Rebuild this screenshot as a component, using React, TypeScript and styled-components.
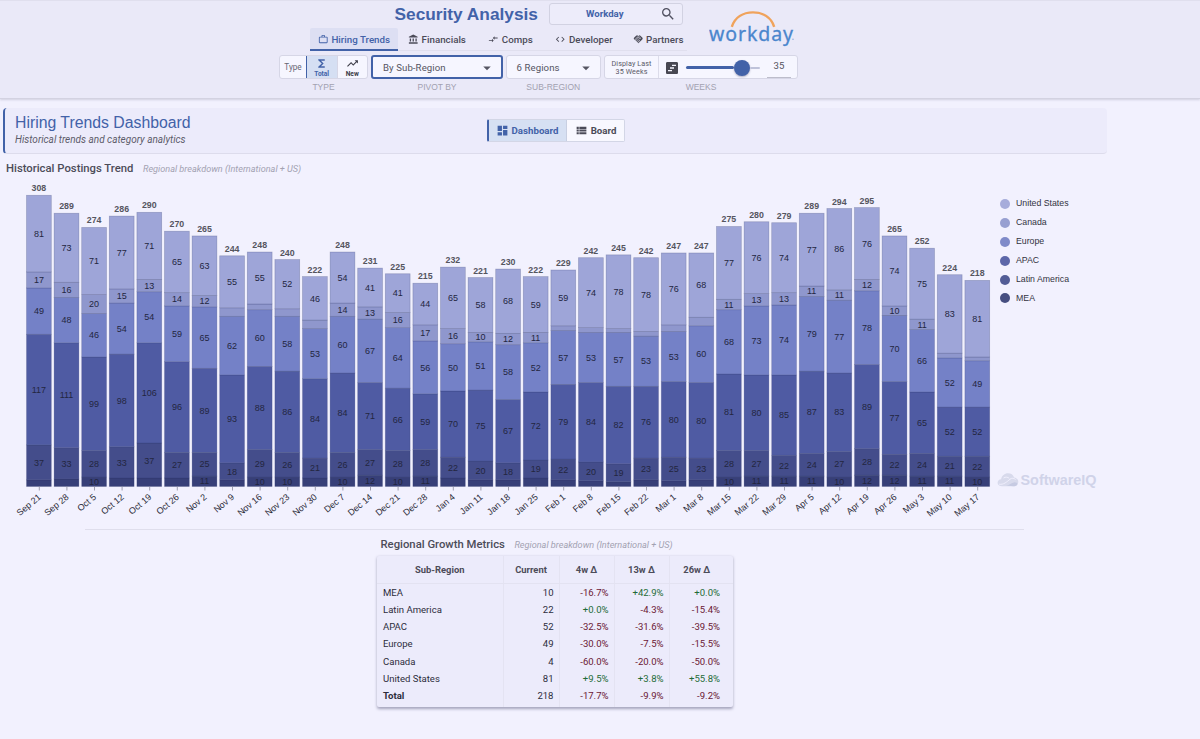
import React from "react";
import styled, { createGlobalStyle, css } from "styled-components";
import {
  MdWorkOutline,
  MdAccountBalance,
  MdCompareArrows,
  MdCode,
  MdHandshake,
  MdFunctions,
  MdTrendingUp,
  MdSearch,
  MdViewTimeline,
  MdDashboard,
  MdViewList,
  MdArrowDropDown,
} from "react-icons/md";

const roboto = `Roboto, "Liberation Sans", sans-serif`;
const arial = `"Liberation Sans", Arial, sans-serif`;
const blue = "#4262a8";

const GlobalStyle = createGlobalStyle`
  * { box-sizing: border-box; }
  body {
    margin: 0;
    background: #f2f1fe;
    font-family: ${roboto};
    color: #2d2d3c;
  }
`;

const Page = styled.div`
  width: 1200px;
  height: 739px;
  overflow: hidden;
  background: #f2f1fe;
`;

/* ---------- header ---------- */

const Header = styled.header`
  height: 99px;
  background: #eae9f8;
  border-top: 1px solid #e0dfee;
  border-bottom: 1px solid #d3d2e1;
  box-shadow: 0 1px 2px rgba(60, 60, 90, 0.18);
`;

const HeaderTop = styled.div`
  display: flex;
  height: 50px;
  padding-left: 310px;
`;

const HeaderMain = styled.div`
  width: 377px;
`;

const TitleRow = styled.div`
  display: flex;
  align-items: center;
  height: 27px;
  padding: 0 0 1px 84.5px;
`;

const AppTitle = styled.h1`
  width: 154.5px;
  margin: 0;
  font: 700 17.3px/26px ${arial};
  color: ${blue};
  white-space: nowrap;
`;

const Search = styled.div`
  display: flex;
  align-items: center;
  width: 134px;
  height: 22px;
  border: 1px solid #d2d2e2;
  border-radius: 3px;
  background: #edecfa;
  color: ${blue};
  font: 700 9.6px/20px ${roboto};
  padding-right: 6.5px;

  span {
    flex: 1;
    text-align: center;
  }
  svg {
    width: 16px;
    height: 16px;
    color: #505060;
  }
`;

const Tabs = styled.nav`
  display: flex;
  height: 23px;
  border-bottom: 1px solid #e0dfee;
`;

const Tab = styled.div<{ $w: number; $active?: boolean }>`
  display: flex;
  flex-shrink: 0;
  align-items: center;
  justify-content: center;
  gap: 3px;
  width: ${(p) => p.$w}px;
  height: 23px;
  padding-top: 2px;
  font: 500 9.75px/20px ${roboto};
  color: #4b4b58;
  white-space: nowrap;
  border-bottom: 2px solid transparent;
  ${(p) =>
    p.$active &&
    css`
      color: ${blue};
      background: #dddff3;
      border-bottom-color: ${blue};
      border-radius: 2px 2px 0 0;
    `}
  svg {
    width: 10.5px;
    height: 10.5px;
  }
`;

const LogoBox = styled.div`
  padding: 8px 0 0 22px;
`;

const Controls = styled.div`
  display: flex;
  align-items: flex-start;
  padding: 4px 0 0 279px;
`;

const Field = styled.div<{ $w: number; $gap: number }>`
  width: ${(p) => p.$w}px;
  margin-right: ${(p) => p.$gap}px;
  label {
    display: block;
    margin-top: 2px;
    text-align: center;
    font: 400 8.5px/12px ${arial};
    color: #a2a1b0;
  }
`;

const ControlBox = styled.div<{ $focus?: boolean }>`
  display: flex;
  height: 24px;
  overflow: hidden;
  border-radius: 3px;
  background: #f6f6ff;
  border: ${(p) => (p.$focus ? `2px solid ${blue}` : "1px solid #d6d6e6")};
`;

const TypeName = styled.div`
  width: 26px;
  font: 400 8.2px/22px ${roboto};
  text-align: center;
  color: #666674;
`;

const TypeOption = styled.div<{ $active?: boolean }>`
  flex: 1;
  display: flex;
  flex-direction: column;
  align-items: center;
  padding-top: 0.5px;
  font: 700 6.6px/8px ${roboto};
  color: ${(p) => (p.$active ? blue : "#3c3c48")};
  background: ${(p) => (p.$active ? "#d5dff3" : "transparent")};
  border-left: ${(p) => (p.$active ? `1.5px solid ${blue}` : "1px solid #d6d6e6")};
  svg {
    width: 13px;
    height: 13px;
  }
`;

const SelectText = styled.div`
  flex: 1;
  display: flex;
  align-items: center;
  justify-content: space-between;
  padding: 1px 5px 0 10px;
  font: 400 9.6px/20px ${roboto};
  letter-spacing: 0.1px;
  color: #555562;
  svg {
    width: 18px;
    height: 18px;
  }
`;

const DisplayText = styled.div`
  width: 54px;
  padding-top: 3.5px;
  border-right: 1px solid #dcdcea;
  font: 400 7.2px/8px ${roboto};
  letter-spacing: 0.1px;
  text-align: center;
  color: #5a5a68;
`;

const WeekIcon = styled.div`
  display: flex;
  align-items: center;
  padding: 1px 6px 0 5px;
  color: #484852;
  svg {
    width: 16px;
    height: 16px;
  }
`;

const Slider = styled.div`
  display: flex;
  align-items: center;
  width: 74px;
  padding-top: 1px;
`;

const Rail = styled.div<{ $w: number; $on?: boolean }>`
  width: ${(p) => p.$w}px;
  height: ${(p) => (p.$on ? 3 : 2)}px;
  border-radius: 2px;
  background: ${(p) => (p.$on ? blue : "#bfc3da")};
`;

const Thumb = styled.div`
  width: 16px;
  height: 16px;
  border-radius: 50%;
  background: ${blue};
  box-shadow: 0 1px 2px rgba(40, 40, 80, 0.35);
`;

const WeekValue = styled.div`
  width: 24px;
  height: 22px;
  margin-left: 7px;
  border-bottom: 1px solid #bdbdcb;
  font: 400 9.6px/20px ${roboto};
  text-align: center;
  color: #555562;
`;

/* ---------- banner ---------- */

const Banner = styled.section`
  display: flex;
  align-items: center;
  width: 1104px;
  height: 46px;
  margin: 8.5px 0 0 3px;
  padding-left: 10px;
  background: #ecebfb;
  border-left: 2px solid ${blue};
  border-bottom: 1px solid #dddcec;
  border-radius: 4px;
`;

const BannerText = styled.div`
  width: 472px;
`;

const BannerTitle = styled.h2`
  margin: 0;
  font: 400 15.8px/19px ${arial};
  color: ${blue};
`;

const BannerSub = styled.p`
  margin: 1px 0 0;
  font: italic 400 10px/14px ${roboto};
  color: #5c5c6a;
`;

const Toggle = styled.div`
  display: flex;
  width: 138px;
  height: 23px;
  border: 1px solid #d3d6e6;
  border-left: 2px solid ${blue};
  border-radius: 2px;
  overflow: hidden;
  background: #f8f8ff;
`;

const ToggleItem = styled.div<{ $w: number; $active?: boolean }>`
  display: flex;
  align-items: center;
  justify-content: center;
  gap: 3px;
  width: ${(p) => p.$w}px;
  padding-right: ${(p) => (p.$active ? 1 : 0)}px;
  font: 700 9.7px/21px ${roboto};
  color: ${(p) => (p.$active ? blue : "#4b4b58")};
  background: ${(p) => (p.$active ? "#d6e0f3" : "transparent")};
  border-right: ${(p) => (p.$active ? "1px solid #c8cfe2" : "none")};
  svg {
    width: 13px;
    height: 13px;
  }
`;

/* ---------- sections ---------- */

const SectionHead = styled.div<{ $left: number; $top: number }>`
  display: flex;
  align-items: baseline;
  gap: 9.5px;
  height: 16px;
  margin: ${(p) => p.$top}px 0 0 ${(p) => p.$left}px;
  white-space: nowrap;
  h3 {
    margin: 0;
    font: 500 11.3px/16px ${roboto};
    color: #4c4c59;
  }
  em {
    font: italic 400 9.15px/16px ${roboto};
    color: #a3a2b2;
  }
`;

const ChartRow = styled.div`
  display: flex;
  height: 352px;
  svg.chart {
    display: block;
  }
`;

const ChartSide = styled.aside`
  display: flex;
  flex-direction: column;
  justify-content: space-between;
  width: 110px;
  padding: 17.5px 0 40.5px;
`;

const Legend = styled.ul`
  margin: 0;
  padding: 0 0 0 9px;
  list-style: none;
`;

const LegendItem = styled.li<{ $color: string }>`
  display: flex;
  align-items: center;
  gap: 6px;
  height: 18.9px;
  font: 400 8.75px/19px ${arial};
  color: #33333f;
  &::before {
    content: "";
    width: 10px;
    height: 10px;
    border-radius: 50%;
    background: ${(p) => p.$color};
  }
`;

const Watermark = styled.div`
  display: flex;
  align-items: center;
  gap: 2px;
  padding-left: 5.5px;
  height: 18px;
  font: 700 14.4px/18px ${arial};
  color: #d0d3e9;
`;

const Divider = styled.hr`
  width: 939px;
  height: 1px;
  margin: 0 0 0 85px;
  border: 0;
  background: #dfdeec;
`;

const Table = styled.table`
  width: 356px;
  margin: 3px 0 0 377px;
  border-collapse: collapse;
  table-layout: fixed;
  background: #ecebfb;
  border-radius: 2px;
  box-shadow: 0 1.5px 3px rgba(50, 50, 90, 0.4);
  font: 400 9.55px/17px ${roboto};
  color: #2d2d3c;

  th {
    height: 27px;
    padding: 0;
    font-weight: 700;
    font-size: 9.4px;
    color: #4c4c59;
    border-bottom: 1px solid #e3e2f1;
  }
  th:not(:last-child),
  td:not(:last-child) {
    border-right: 1px solid #e4e3f2;
  }
  td {
    height: 17.35px;
    padding: 0 5px 0 0;
    text-align: right;
  }
  td:first-child {
    padding-left: 6px;
    text-align: left;
  }
  td:last-child {
    padding-right: 13px;
  }
  th:last-child {
    padding-right: 9px;
  }
  tr:last-child td {
    height: 19.5px;
    padding-bottom: 2px;
  }
  tr:last-child td:first-child {
    font-weight: 700;
  }
`;

const Delta = styled.td<{ $up: boolean }>`
  color: ${(p) => (p.$up ? "#1f6b38" : "#6b1733")};
`;

/* ---------- data ---------- */

// Stacking order, bottom to top.
const series = [
  { name: "MEA", color: "#373f78", dot: "#464e80" },
  { name: "Latin America", color: "#444d8b", dot: "#525c96" },
  { name: "APAC", color: "#4f5ba3", dot: "#5c66a9" },
  { name: "Europe", color: "#7481c7", dot: "#7f8ac9" },
  { name: "Canada", color: "#8f97cd", dot: "#979fd1" },
  { name: "United States", color: "#9ea5d8", dot: "#a6acdb" },
];

const weeks: [string, number[]][] = [
  ["Sep 21", [7, 37, 117, 49, 17, 81]],
  ["Sep 28", [8, 33, 111, 48, 16, 73]],
  ["Oct 5", [10, 28, 99, 46, 20, 71]],
  ["Oct 12", [9, 33, 98, 54, 15, 77]],
  ["Oct 19", [9, 37, 106, 54, 13, 71]],
  ["Oct 26", [9, 27, 96, 59, 14, 65]],
  ["Nov 2", [11, 25, 89, 65, 12, 63]],
  ["Nov 9", [7, 18, 93, 62, 9, 55]],
  ["Nov 16", [10, 29, 88, 60, 6, 55]],
  ["Nov 23", [10, 26, 86, 58, 8, 52]],
  ["Nov 30", [9, 21, 84, 53, 9, 46]],
  ["Dec 7", [10, 26, 84, 60, 14, 54]],
  ["Dec 14", [12, 27, 71, 67, 13, 41]],
  ["Dec 21", [10, 28, 66, 64, 16, 41]],
  ["Dec 28", [11, 28, 59, 56, 17, 44]],
  ["Jan 4", [9, 22, 70, 50, 16, 65]],
  ["Jan 11", [7, 20, 75, 51, 10, 58]],
  ["Jan 18", [7, 18, 67, 58, 12, 68]],
  ["Jan 25", [9, 19, 72, 52, 11, 59]],
  ["Feb 1", [7, 22, 79, 57, 5, 59]],
  ["Feb 8", [6, 20, 84, 53, 5, 74]],
  ["Feb 15", [5, 19, 82, 57, 4, 78]],
  ["Feb 22", [7, 23, 76, 53, 5, 78]],
  ["Mar 1", [6, 25, 80, 53, 7, 76]],
  ["Mar 8", [7, 23, 80, 60, 9, 68]],
  ["Mar 15", [10, 28, 81, 68, 11, 77]],
  ["Mar 22", [11, 27, 80, 73, 13, 76]],
  ["Mar 29", [11, 22, 85, 74, 13, 74]],
  ["Apr 5", [11, 24, 87, 79, 11, 77]],
  ["Apr 12", [10, 27, 83, 77, 11, 86]],
  ["Apr 19", [12, 28, 89, 78, 12, 76]],
  ["Apr 26", [12, 22, 77, 70, 10, 74]],
  ["May 3", [11, 24, 65, 66, 11, 75]],
  ["May 10", [11, 21, 52, 52, 5, 83]],
  ["May 17", [10, 22, 52, 49, 4, 81]],
];

const metrics: [string, number, string, string, string][] = [
  ["MEA", 10, "-16.7%", "+42.9%", "+0.0%"],
  ["Latin America", 22, "+0.0%", "-4.3%", "-15.4%"],
  ["APAC", 52, "-32.5%", "-31.6%", "-39.5%"],
  ["Europe", 49, "-30.0%", "-7.5%", "-15.5%"],
  ["Canada", 4, "-60.0%", "-20.0%", "-50.0%"],
  ["United States", 81, "+9.5%", "+3.8%", "+55.8%"],
  ["Total", 218, "-17.7%", "-9.9%", "-9.2%"],
];

/* ---------- drawings ---------- */

const SegmentText = styled.text`
  font: 400 9px ${arial};
  fill: #23263f;
  text-anchor: middle;
`;
const TotalText = styled.text`
  font: 700 8.8px ${arial};
  fill: #55555e;
  text-anchor: middle;
`;
const AxisText = styled.text`
  font: 400 9px ${arial};
  fill: #2b2b38;
  text-anchor: end;
`;

const BASE = 309.5;
const UNIT = 0.9455;
const PITCH = 27.6;
const BAR = 24.8;

function StackedBars() {
  return (
    <svg className="chart" width="991" height="352" viewBox="0 0 991 352">
      {weeks.map(([label, values], i) => {
        const cx = 38.9 + i * PITCH;
        let y = BASE;
        const total = values.reduce((a, b) => a + b, 0);
        return (
          <g key={label}>
            {values.map((v, s) => {
              const h = v * UNIT;
              y -= h;
              return (
                <g key={s}>
                  <rect
                    x={cx - BAR / 2}
                    y={y}
                    width={BAR}
                    height={h}
                    fill={series[s].color}
                    stroke="#2c3468"
                    strokeOpacity={0.3}
                    strokeWidth={0.7}
                  />
                  {v >= 10 && (
                    <SegmentText x={cx} y={y + h / 2 + 3.2}>
                      {v}
                    </SegmentText>
                  )}
                </g>
              );
            })}
            <TotalText x={cx} y={y - 4}>
              {total}
            </TotalText>
            <line x1={cx + 0.4} x2={cx + 0.4} y1={BASE} y2={BASE + 4} stroke="#8a8a9c" strokeWidth={0.8} />
            <AxisText transform={`translate(${cx + 2.8} ${BASE + 11.5}) rotate(-40)`}>{label}</AxisText>
          </g>
        );
      })}
    </svg>
  );
}

const LogoText = styled.text`
  font: 400 19.5px "Noto Sans", "Open Sans", sans-serif;
  fill: #4a86cd;
  stroke: #4a86cd;
  stroke-width: 0.3px;
`;

function WorkdayLogo() {
  return (
    <svg width="88" height="40" viewBox="0 0 88 40">
      <path d="M22.8 17.8C26 8.5 34 3.4 44 3.4S62 8.5 65.2 17.8" fill="none" stroke="#f0a35c" strokeWidth="2.4" />
      <LogoText x="0" y="31.5" textLength="84">
        workday
      </LogoText>
      <circle cx="84" cy="30.3" r="0.8" fill="#8fb0de" />
    </svg>
  );
}

function CloudMark() {
  return (
    <svg width="22" height="16" viewBox="0 0 22 16">
      <path
        d="M5 14.2C2.300 14.200.6 12.700.6 10.700c0-1.900 1.500-3.300 3.500-3.500C4.700 3.600 7.600 1.200 11 1.200c3 0 5.200 1.600 6.100 4.200 2.400.4 4.200 2 4.200 4.400 0 2.600-1.900 4.400-4.600 4.400z"
        fill="#d8daec"
      />
      <path
        d="M2.200 12.200C6.500 13 10 9.800 13 7.200 14.800 5.800 17 6 18.500 7.500M6.500 6c2-1.300 4.200-1 5.700.3"
        fill="none"
        stroke="#f2f1fe"
        strokeWidth="0.9"
      />
      <path d="M9 13.600c3.500-.4 5.200-3 8.500-3.400 2 0 3 .8 3 2-.8 1.400-2 2-3.800 2z" fill="#c6cae2" />
    </svg>
  );
}

export default function App() {
  return (
    <Page>
      <GlobalStyle />
      <Header>
        <HeaderTop>
          <HeaderMain>
            <TitleRow>
              <AppTitle>Security Analysis</AppTitle>
              <Search>
                <span>Workday</span>
                <MdSearch />
              </Search>
            </TitleRow>
            <Tabs>
              <Tab $w={88} $active>
                <MdWorkOutline />
                Hiring Trends
              </Tab>
              <Tab $w={78}>
                <MdAccountBalance />
                Financials
              </Tab>
              <Tab $w={69}>
                <MdCompareArrows />
                Comps
              </Tab>
              <Tab $w={78}>
                <MdCode />
                Developer
              </Tab>
              <Tab $w={70}>
                <MdHandshake />
                Partners
              </Tab>
            </Tabs>
          </HeaderMain>
          <LogoBox>
            <WorkdayLogo />
          </LogoBox>
        </HeaderTop>
        <Controls>
          <Field $w={89} $gap={3}>
            <ControlBox>
              <TypeName>Type</TypeName>
              <TypeOption $active>
                <MdFunctions />
                Total
              </TypeOption>
              <TypeOption>
                <MdTrendingUp />
                New
              </TypeOption>
            </ControlBox>
            <label>TYPE</label>
          </Field>
          <Field $w={132} $gap={2.5}>
            <ControlBox $focus>
              <SelectText>
                By Sub-Region
                <MdArrowDropDown />
              </SelectText>
            </ControlBox>
            <label>PIVOT BY</label>
          </Field>
          <Field $w={95.5} $gap={3}>
            <ControlBox>
              <SelectText>
                6 Regions
                <MdArrowDropDown />
              </SelectText>
            </ControlBox>
            <label>SUB-REGION</label>
          </Field>
          <Field $w={194} $gap={0}>
            <ControlBox>
              <DisplayText>
                Display Last
                <br />
                35 Weeks
              </DisplayText>
              <WeekIcon>
                <MdViewTimeline />
              </WeekIcon>
              <Slider>
                <Rail $w={49} $on />
                <Thumb />
                <Rail $w={10} />
              </Slider>
              <WeekValue>35</WeekValue>
            </ControlBox>
            <label>WEEKS</label>
          </Field>
        </Controls>
      </Header>

      <Banner>
        <BannerText>
          <BannerTitle>Hiring Trends Dashboard</BannerTitle>
          <BannerSub>Historical trends and category analytics</BannerSub>
        </BannerText>
        <Toggle>
          <ToggleItem $w={78} $active>
            <MdDashboard />
            Dashboard
          </ToggleItem>
          <ToggleItem $w={57}>
            <MdViewList />
            Board
          </ToggleItem>
        </Toggle>
      </Banner>

      <SectionHead $left={6} $top={7.5}>
        <h3>Historical Postings Trend</h3>
        <em>Regional breakdown (International + US)</em>
      </SectionHead>

      <ChartRow>
        <StackedBars />
        <ChartSide>
          <Legend>
            {[...series].reverse().map((s) => (
              <LegendItem key={s.name} $color={s.dot}>
                {s.name}
              </LegendItem>
            ))}
          </Legend>
          <Watermark>
            <CloudMark />
            SoftwareIQ
          </Watermark>
        </ChartSide>
      </ChartRow>

      <Divider />

      <SectionHead $left={380.5} $top={7}>
        <h3>Regional Growth Metrics</h3>
        <em>Regional breakdown (International + US)</em>
      </SectionHead>

      <Table>
        <colgroup>
          <col width="126" />
          <col width="56" />
          <col width="55" />
          <col width="55" />
          <col width="64" />
        </colgroup>
        <thead>
          <tr>
            <th>Sub-Region</th>
            <th>Current</th>
            <th>4w Δ</th>
            <th>13w Δ</th>
            <th>26w Δ</th>
          </tr>
        </thead>
        <tbody>
          {metrics.map(([name, current, ...deltas]) => (
            <tr key={name}>
              <td>{name}</td>
              <td>{current}</td>
              {deltas.map((d, i) => (
                <Delta key={i} $up={d.startsWith("+")}>
                  {d}
                </Delta>
              ))}
            </tr>
          ))}
        </tbody>
      </Table>
    </Page>
  );
}
